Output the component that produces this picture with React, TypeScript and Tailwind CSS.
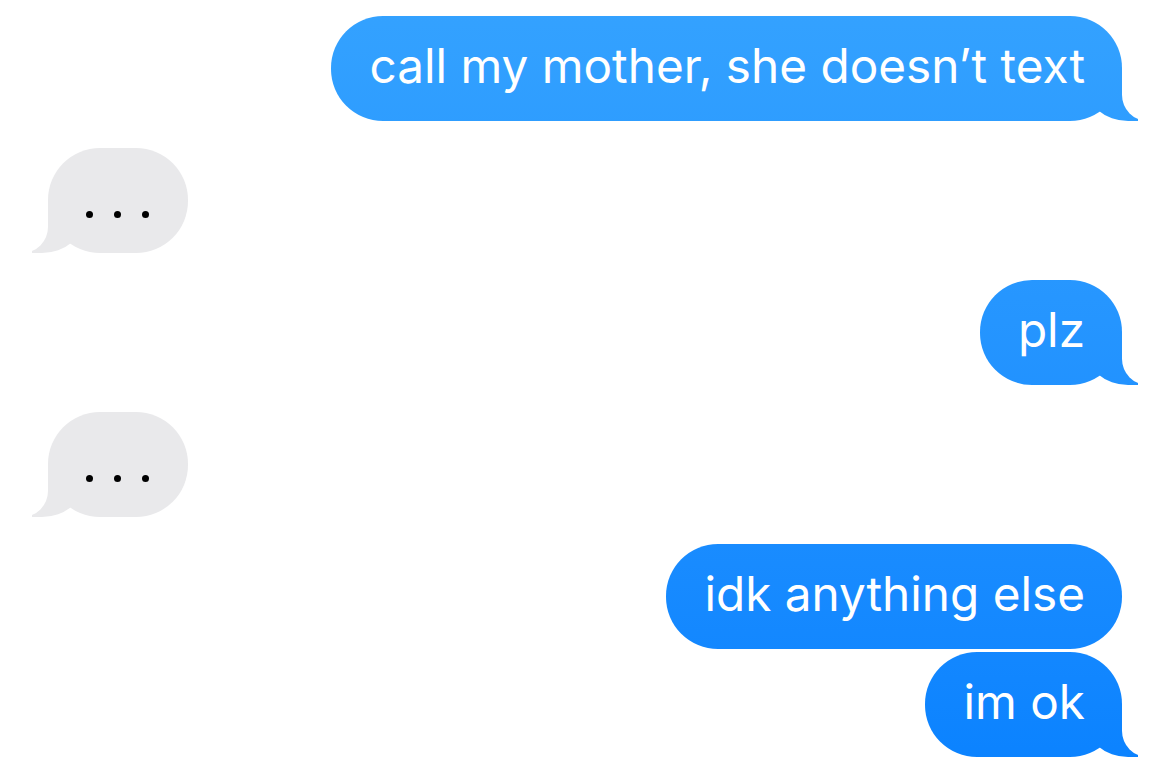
const sent =
  "relative flex h-[105px] items-center rounded-[52px] pl-[38px] pr-[37px] text-white bg-fixed bg-linear-to-b from-[#34a2ff] to-[#0a82ff]";
const tailRight =
  "before:absolute before:bottom-0 before:right-[-16px] before:h-[52px] before:w-[52px] before:rounded-bl-[42px_36px] before:bg-fixed before:bg-linear-to-b before:from-[#34a2ff] before:to-[#0a82ff] after:absolute after:bottom-0 after:right-[-66px] after:h-[52px] after:w-[66px] after:rounded-bl-[26px] after:bg-white";
const tailLeft =
  "before:absolute before:bottom-0 before:left-[-16px] before:h-[52px] before:w-[52px] before:rounded-br-[42px_36px] before:bg-[#e9e9eb] after:absolute after:bottom-0 after:left-[-66px] after:h-[52px] after:w-[66px] after:rounded-br-[26px] after:bg-white";

function Sent({ text, tail = true }: { text: string; tail?: boolean }) {
  return (
    <div className="flex justify-end">
      <div className={sent + (tail ? " " + tailRight : "")}>
        <span className="relative -mt-[3px]">{text}</span>
      </div>
    </div>
  );
}

function Typing() {
  return (
    <div className="flex justify-start">
      <div className={"relative flex h-[105px] w-[140px] items-end gap-[21px] rounded-[52px] bg-[#e9e9eb] pb-[35px] pl-[38px] " + tailLeft}>
        <span className="h-[7px] w-[7px] rounded-full bg-black" />
        <span className="h-[7px] w-[7px] rounded-full bg-black" />
        <span className="h-[7px] w-[7px] rounded-full bg-black" />
      </div>
    </div>
  );
}

export default function App() {
  return (
    <div className="h-[773px] w-full overflow-hidden bg-white px-[48px] pt-[16px] font-['Inter',sans-serif] text-[47.7px]">
      <div className="flex flex-col">
        <Sent text="call my mother, she doesn’t text" />
        <div className="h-[27px]" />
        <Typing />
        <div className="h-[27px]" />
        <Sent text="plz" />
        <div className="h-[27px]" />
        <Typing />
        <div className="h-[27px]" />
        <Sent text="idk anything else" tail={false} />
        <div className="h-[3px]" />
        <Sent text="im ok" />
      </div>
    </div>
  );
}
